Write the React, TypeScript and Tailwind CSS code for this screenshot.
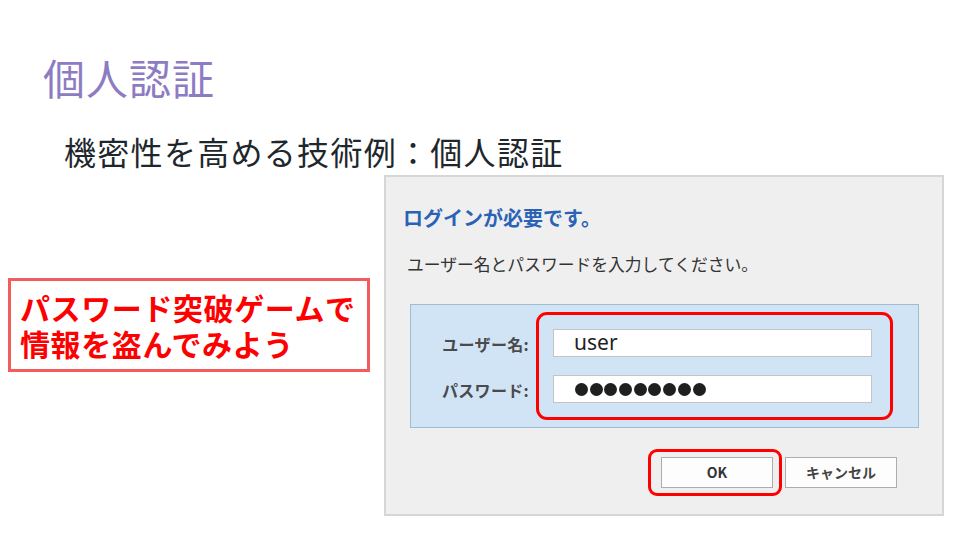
import React from "react";

const jp = { fontFamily: '"Noto Sans CJK JP", "Noto Sans", sans-serif' };

export default function App() {
  return (
    <div className="w-[960px] h-[540px] bg-white overflow-hidden flex flex-col" style={jp}>
      <div className="pl-[43px] mt-[56px] text-[42px] leading-[42px] tracking-[1px] text-[#8e7cc3]">個人認証</div>
      <div className="pl-[64px] mt-[37px] text-[32px] leading-[32px] tracking-[1.3px] text-[#1e272c]">
        機密性を高める技術例：個人認証
      </div>
      <div className="flex items-start mt-[8px]">
        <div className="ml-[8px] mt-[103px] w-[362px] h-[94px] border-[3px] border-[#f25c5c] pl-[9px] pt-[8px] text-[30px] leading-[36px] font-bold tracking-[0.6px] text-[#ff0000] whitespace-nowrap">
          <div>パスワード突破ゲームで</div>
          <div>情報を盗んでみよう</div>
        </div>
        <div className="ml-[14px] w-[560px] h-[341px] border-2 border-[#d6d6d6] bg-[#efefef] flex flex-col">
          <div className="pl-[17px] mt-[29px] text-[20px] leading-[24px] font-bold text-[#2a63b6]">
            ログインが必要です。
          </div>
          <div className="pl-[21px] mt-[24px] text-[16.8px] leading-[20px] text-[#333333]">
            ユーザー名とパスワードを入力してください。
          </div>
          <div className="ml-[24px] mt-[30px] w-[509px] h-[124px] border border-[#9fbcd3] bg-[#d0e4f5] flex items-start">
            <div className="w-[118px] pt-[25px] flex flex-col gap-[18px] text-[16px] font-bold tracking-[0.3px] text-[#4a4a4a]">
              <div className="h-[28px] leading-[28px] text-right">ユーザー名:</div>
              <div className="h-[28px] leading-[28px] text-right">パスワード:</div>
            </div>
            <div className="ml-[7px] mt-[7px] w-[357px] h-[108px] rounded-[11px] border-[3px] border-[#ff0000] pl-[14px] pt-[14px] flex flex-col gap-[18px]">
              <div className="w-[319px] h-[28px] bg-white border border-[#c4c4c4] pl-[20px] flex items-center text-[21px] text-[#222]" style={{ fontFamily: '"Noto Sans", sans-serif' }}>
                user
              </div>
              <div className="w-[319px] h-[28px] bg-white border border-[#c4c4c4] pl-[21px] flex items-center gap-[1.7px]">
                {Array.from({ length: 9 }).map((_, i) => (
                  <span key={i} className="w-[13px] h-[13px] rounded-full bg-[#1f1f1f]" />
                ))}
              </div>
            </div>
          </div>
          <div className="mt-[21px] flex justify-end pr-[45px]">
            <div className="rounded-[9px] border-[3px] border-[#ff0000] pl-[10px] pr-[6px] py-[5px]">
              <div className="w-[112px] h-[31px] bg-[#fdfdfd] border border-[#adadad] flex items-center justify-center text-[14px] font-bold text-[#333]">
                OK
              </div>
            </div>
            <div className="ml-[3px] mt-[8px] w-[112px] h-[31px] bg-[#fdfdfd] border border-[#adadad] flex items-center justify-center text-[14px] font-bold text-[#444]">
              キャンセル
            </div>
          </div>
        </div>
      </div>
    </div>
  );
}
